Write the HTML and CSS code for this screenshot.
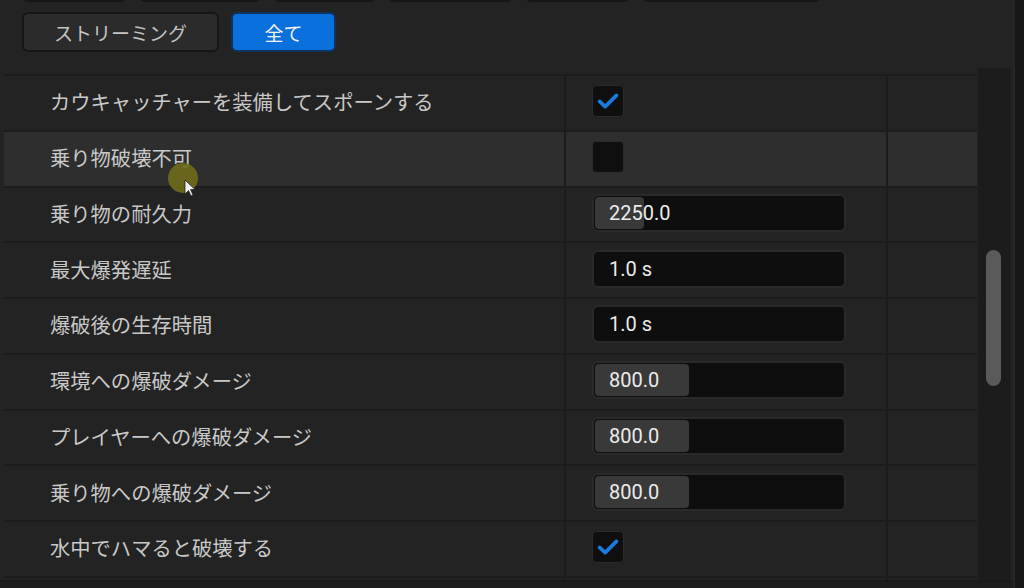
FILE: index.html
```html
<!DOCTYPE html>
<html>
<head>
    <title>乗り物の設定</title>
    <meta name="viewport" content="width=device-width, initial-scale=1.0">
    <link rel="stylesheet" href="styles.css">
</head>

<body>

<div class="app">
    <div class="main">
        <div class="toolbar">
            <div class="tab-row tab-row-top">
                <button class="tab" style="width:105px"></button>
                <button class="tab" style="width:122px"></button>
                <button class="tab" style="width:103px"></button>
                <button class="tab" style="width:125px"></button>
                <button class="tab" style="width:105px"></button>
                <button class="tab" style="width:179px"></button>
            </div>
            <div class="tab-row">
                <button class="tab tab-wide">ストリーミング</button>
                <button class="tab tab-active">全て</button>
            </div>
        </div>

        <div class="content">
            <div class="table">
                <div class="row">
                    <div class="cell label">カウキャッチャーを装備してスポーンする</div>
                    <div class="cell value">
                        <span class="check">
                            <svg width="32" height="32" viewBox="0 0 32 32"><polyline points="7,16.5 13,22 25,10" /></svg>
                        </span>
                    </div>
                    <div class="cell extra"></div>
                </div>
                <div class="row row-hover">
                    <div class="cell label">乗り物破壊不可</div>
                    <div class="cell value"><span class="check"></span></div>
                    <div class="cell extra"></div>
                </div>
                <div class="row">
                    <div class="cell label">乗り物の耐久力</div>
                    <div class="cell value">
                        <div class="field"><div class="fill" style="width:49px"></div><span>2250.0</span></div>
                    </div>
                    <div class="cell extra"></div>
                </div>
                <div class="row">
                    <div class="cell label">最大爆発遅延</div>
                    <div class="cell value">
                        <div class="field"><span>1.0 s</span></div>
                    </div>
                    <div class="cell extra"></div>
                </div>
                <div class="row">
                    <div class="cell label">爆破後の生存時間</div>
                    <div class="cell value">
                        <div class="field"><span>1.0 s</span></div>
                    </div>
                    <div class="cell extra"></div>
                </div>
                <div class="row">
                    <div class="cell label">環境への爆破ダメージ</div>
                    <div class="cell value">
                        <div class="field"><div class="fill" style="width:94px"></div><span>800.0</span></div>
                    </div>
                    <div class="cell extra"></div>
                </div>
                <div class="row">
                    <div class="cell label">プレイヤーへの爆破ダメージ</div>
                    <div class="cell value">
                        <div class="field"><div class="fill" style="width:94px"></div><span>800.0</span></div>
                    </div>
                    <div class="cell extra"></div>
                </div>
                <div class="row">
                    <div class="cell label">乗り物への爆破ダメージ</div>
                    <div class="cell value">
                        <div class="field"><div class="fill" style="width:94px"></div><span>800.0</span></div>
                    </div>
                    <div class="cell extra"></div>
                </div>
                <div class="row">
                    <div class="cell label">水中でハマると破壊する</div>
                    <div class="cell value">
                        <span class="check">
                            <svg width="32" height="32" viewBox="0 0 32 32"><polyline points="7,16.5 13,22 25,10" /></svg>
                        </span>
                    </div>
                    <div class="cell extra"></div>
                </div>
                <!-- next row, cut off by the frame -->
                <div class="row">
                    <div class="cell label"></div>
                    <div class="cell value"></div>
                    <div class="cell extra"></div>
                </div>
            </div>

            <div class="scrollbar">
                <div class="thumb"></div>
            </div>
        </div>
        <div class="frame-bottom"></div>
    </div>
    <div class="edge"></div>
</div>

<!-- mouse pointer with click highlight -->
<div class="pointer">
    <svg width="40" height="40" viewBox="0 0 40 40">
        <circle cx="16" cy="16" r="15" fill="#6f6d1c" opacity="0.9" />
        <path d="M18 18 L18 32 L21.5 28.5 L24 34 L26 33 L23.5 27.5 L28 27.5 Z" fill="#f2f2f2" stroke="#222" stroke-width="0.8" />
    </svg>
</div>

</body>
</html>
```

FILE: styles.css
```css
body {
    margin: 0;
    padding: 0;
    background: #232323;
    font-family: "Noto Sans CJK JP", "Noto Sans", sans-serif;
    overflow: hidden;
}

.app {
    display: flex;
    height: 588px;
}

.main {
    flex: 1;
    display: flex;
    flex-direction: column;
}

.edge {
    width: 9px;
    background: #171717;
    border-left: 2px solid #252525;
}

.toolbar {
    margin-top: -38px;
    padding-left: 22px;
    height: 106px;
    flex-shrink: 0;
}

.tab-row {
    display: flex;
    gap: 12px;
    margin-bottom: 10px;
}

.tab {
    height: 40px;
    background: #2b2b2b;
    border: 2px solid #161616;
    border-radius: 6px;
    color: #c4c4c4;
    font-family: "Noto Sans CJK JP", sans-serif;
    font-size: 19px;
    padding: 0;
}

.tab-wide {
    width: 197px;
}

.tab-active {
    width: 105px;
    background: #0a70dc;
    border-color: #10325a;
    color: #f4f4f4;
}

.content {
    height: 512px;
    display: flex;
    padding-left: 4px;
}

.table {
    flex: 1;
    margin-top: 6px;
    border-top: 2px solid #1c1c1c;
    overflow: hidden;
}

.row {
    display: flex;
    height: 50.75px;
    padding-bottom: 3px;
    border-bottom: 2px solid #1c1c1c;
    background: #232323;
}

.row-hover {
    background: #2e2e2e;
}

.cell {
    display: flex;
    align-items: center;
}

.label {
    width: 514px;
    padding-left: 46px;
    border-right: 2px solid #1c1c1c;
    margin-bottom: -3px;
    padding-bottom: 3px;
    color: #c8c8c8;
    font-size: 20.3px;
    white-space: nowrap;
}

.value {
    width: 294px;
    padding-left: 26px;
    border-right: 2px solid #1c1c1c;
    margin-bottom: -3px;
    padding-bottom: 3px;
}

.extra {
    flex: 1;
}

.check {
    width: 30px;
    height: 30px;
    background: #0f0f0f;
    border: 1px solid #2c2c2c;
    border-radius: 4px;
    display: flex;
    align-items: center;
    justify-content: center;
}

.check svg {
    fill: none;
    stroke: #1b7bdc;
    stroke-width: 4;
    stroke-linecap: round;
    stroke-linejoin: round;
}

.field {
    position: relative;
    width: 250px;
    height: 34px;
    background: #0e0e0e;
    border: 2px solid #2a2a2a;
    border-radius: 6px;
    display: flex;
    align-items: center;
}

.fill {
    position: absolute;
    left: 1px;
    top: 1px;
    bottom: 1px;
    background: #393939;
    border-radius: 4px;
}

.field span {
    position: relative;
    padding-left: 15px;
    color: #ececec;
    font-family: Roboto, "Liberation Sans", sans-serif;
    font-size: 20px;
}

.scrollbar {
    width: 33px;
    margin-left: 1px;
    margin-right: 2px;
    background: #1c1c1c;
}

.thumb {
    width: 15px;
    height: 136px;
    margin-top: 182px;
    margin-left: 8px;
    background: #5a5a5a;
    border-radius: 8px;
}

.frame-bottom {
    flex: 1;
    border-top: 2px solid #1a1a1a;
    background: #1d1d1d;
}

.pointer {
    position: absolute;
    left: 167px;
    top: 162px;
    pointer-events: none;
}
```
